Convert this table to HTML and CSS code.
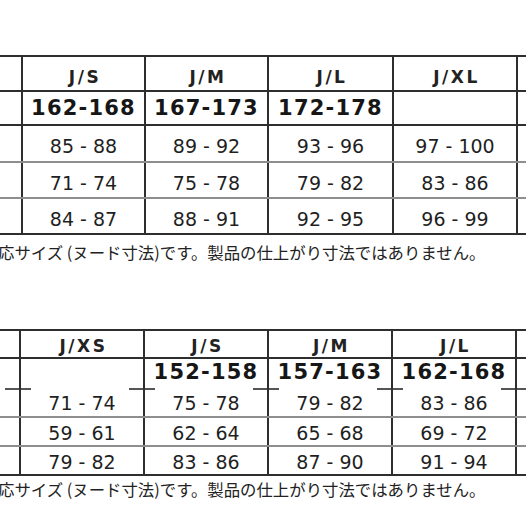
FILE: index.html
```html
<!DOCTYPE html>
<html lang="ja">
<head>
<meta charset="utf-8">
<title>Size chart</title>
<link rel="stylesheet" href="styles.css">
</head>
<body>
<div class="page">
  <section class="block block-top">
    <table class="size-table size-table--top">
      <colgroup>
        <col class="c124"><col class="c123"><col class="c123"><col class="c125"><col class="c124"><col class="c124">
      </colgroup>
      <tr class="row-head"><th></th><th>J/S</th><th>J/M</th><th>J/L</th><th>J/XL</th><th></th></tr>
      <tr class="row-height"><td></td><td>162-168</td><td>167-173</td><td>172-178</td><td></td><td></td></tr>
      <tr class="row-data"><td></td><td>85 - 88</td><td>89 - 92</td><td>93 - 96</td><td>97 - 100</td><td></td></tr>
      <tr class="row-data"><td></td><td>71 - 74</td><td>75 - 78</td><td>79 - 82</td><td>83 - 86</td><td></td></tr>
      <tr class="row-data row-last"><td></td><td>84 - 87</td><td>88 - 91</td><td>92 - 95</td><td>96 - 99</td><td></td></tr>
    </table>
    <p class="note note--top">応サイズ (ヌード寸法)です。製品の仕上がり寸法ではありません。</p>
  </section>

  <section class="block block-bottom">
    <table class="size-table size-table--bottom">
      <colgroup>
        <col class="c124"><col class="c124"><col class="c124"><col class="c124"><col class="c124"><col class="c124">
      </colgroup>
      <tr class="row-head"><th></th><th>J/XS</th><th>J/S</th><th>J/M</th><th>J/L</th><th></th></tr>
      <tr class="row-height"><td></td><td></td><td>152-158</td><td>157-163</td><td>162-168</td><td></td></tr>
      <tr class="row-data row-first"><td></td><td>71 - 74</td><td>75 - 78</td><td>79 - 82</td><td>83 - 86</td><td></td></tr>
      <tr class="row-data"><td></td><td>59 - 61</td><td>62 - 64</td><td>65 - 68</td><td>69 - 72</td><td></td></tr>
      <tr class="row-data row-last"><td></td><td>79 - 82</td><td>83 - 86</td><td>87 - 90</td><td>91 - 94</td><td></td></tr>
    </table>
    <p class="note note--bottom">応サイズ (ヌード寸法)です。製品の仕上がり寸法ではありません。</p>
  </section>
</div>
</body>
</html>
```

FILE: styles.css
```css
html, body {
  margin: 0;
  padding: 0;
  background: #fff;
}

.page {
  width: 526px;
  height: 526px;
  overflow: hidden;
  padding-top: 55px;
  box-sizing: border-box;
  font-family: "DejaVu Sans", Verdana, sans-serif;
  color: #1f1f1f;
}

.block {
  display: flex;
  flex-direction: column;
}

.block-bottom {
  margin-top: 66px;
}

.size-table {
  table-layout: fixed;
  border-collapse: collapse;
  flex: none;
}

.size-table--top {
  width: 743px;
  margin-left: -103px;
}

.size-table--bottom {
  width: 744px;
  margin-left: -105px;
}

.c123 { width: 123px; }
.c124 { width: 124px; }
.c125 { width: 125px; }

.size-table th,
.size-table td {
  border: 2px solid #2e2e2e;
  padding: 0;
  text-align: center;
  vertical-align: middle;
  white-space: nowrap;
  overflow: hidden;
  line-height: 1.1;
}

.row-head th {
  font-weight: bold;
  font-size: 17px;
  letter-spacing: 2.5px;
  padding-left: 3px;
  color: #222;
}

.row-height td {
  font-weight: bold;
  font-size: 21px;
  letter-spacing: 1.2px;
  color: #161616;
}

.row-data td {
  font-size: 19px;
  color: #1f1f1f;
  border-bottom-color: #8e8e8e;
}

.row-data.row-last td {
  border-bottom-color: #2e2e2e;
}

/* top table rows */
.size-table--top .row-head { height: 35px; }
.size-table--top .row-head th { padding-top: 8px; }
.size-table--top .row-height { height: 34px; }
.size-table--top .row-height td { padding-top: 2px; }
.size-table--top .row-data { height: 36px; }
.size-table--top .row-data:nth-child(3) { height: 37px; }
.size-table--top .row-data td { padding-top: 6px; }

/* bottom table rows */
.size-table--bottom .row-head { height: 28px; }
.size-table--bottom .row-head th { padding-top: 5px; }
.size-table--bottom .row-height { height: 30px; }
.size-table--bottom .row-height td {
  border-bottom-style: hidden;
  padding-bottom: 2px;
}
.size-table--bottom .row-data { height: 29px; }
.size-table--bottom .row-data td { padding-top: 3px; }
.size-table--bottom .row-first td {
  background: linear-gradient(to right, #555 0 10px, transparent 10px calc(100% - 14px), #555 calc(100% - 14px)) top / 100% 2px no-repeat;
}

.note {
  margin: 0 0 0 -2px;
  font-family: "Noto Sans CJK JP", "Noto Sans", sans-serif;
  font-size: 16.4px;
  line-height: 22px;
  color: #222;
  white-space: nowrap;
}

.note--top { margin-top: 6px; }
.note--bottom { margin-top: 2px; }
```
